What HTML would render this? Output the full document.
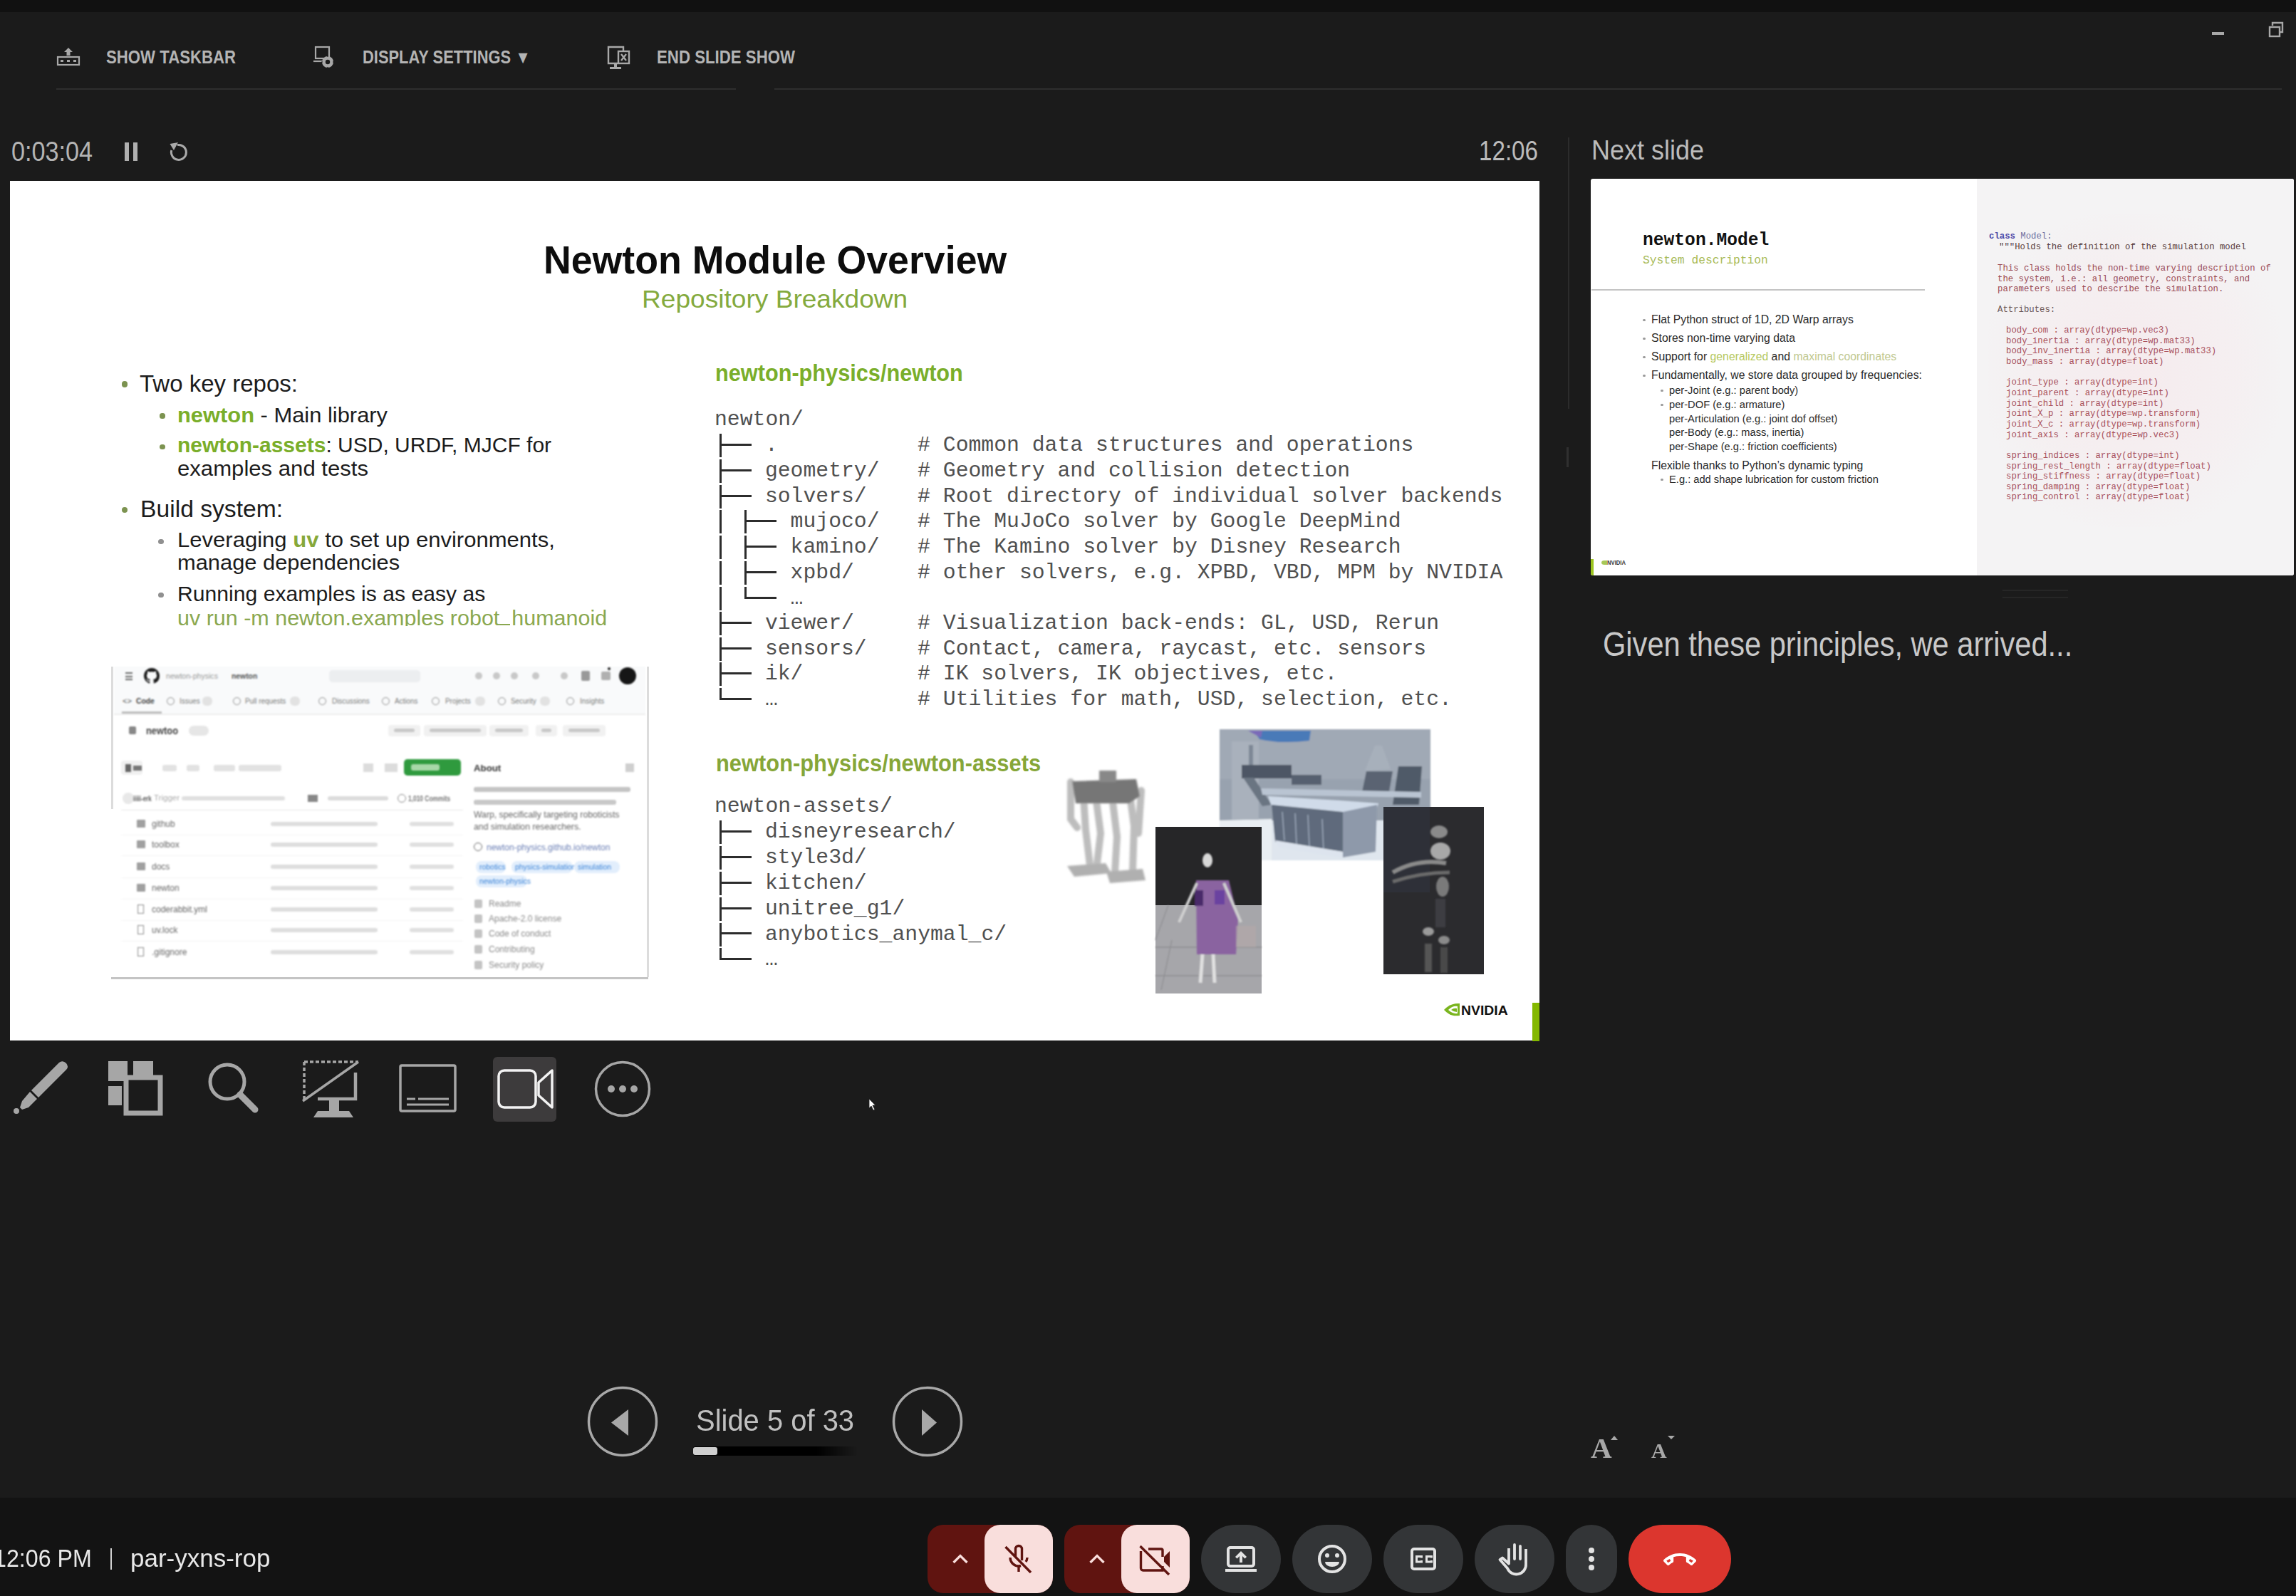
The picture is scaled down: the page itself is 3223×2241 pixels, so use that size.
<!DOCTYPE html>
<html><head><meta charset="utf-8">
<style>
html,body{margin:0;padding:0;}
body{width:3223px;height:2241px;position:relative;overflow:hidden;background:#1b1b1b;font-family:"Liberation Sans",sans-serif;}
.a{position:absolute;}
.t{position:absolute;white-space:pre;line-height:1;transform-origin:0 0;font-family:"Liberation Sans",sans-serif;}
.m{position:absolute;white-space:pre;line-height:1;transform-origin:0 0;font-family:"Liberation Mono",monospace;}
svg{position:absolute;overflow:visible;}
</style></head><body>
<!-- top strip -->
<div class="a" style="left:0;top:0;width:3223px;height:17px;background:#111111"></div>
<!-- toolbar -->
<svg style="left:0;top:0" width="1200" height="130">
  <g fill="none" stroke="#a8a8a8" stroke-width="2.2">
    <rect x="81" y="80" width="30" height="11"/>
  </g>
  <g fill="#a8a8a8">
    <path d="M96 67 L102 73 L98.5 73 L98.5 78 L93.5 78 L93.5 73 L90 73 Z"/>
    <rect x="85" y="84" width="4" height="3"/><rect x="94" y="84" width="4" height="3"/><rect x="103" y="84" width="4" height="3"/>
  </g>
  <!-- display settings icon -->
  <g fill="none" stroke="#a8a8a8" stroke-width="2.2">
    <rect x="443" y="66" width="19" height="16"/>
    <path d="M440 86 L452 86"/>
  </g>
  <g fill="#a8a8a8">
    <circle cx="460" cy="87" r="8"/>
  </g>
  <circle cx="460" cy="87" r="3.2" fill="#1b1b1b"/>
  <g stroke="#1b1b1b" stroke-width="1.2"><path d="M460 78 L460 80 M460 94 L460 96 M451 87 L453 87 M467 87 L469 87"/></g>
  <!-- end slide show icon -->
  <g fill="none" stroke="#a8a8a8" stroke-width="2.4">
    <path d="M867 89 L854 89 L854 66 L875 66 L875 72"/>
    <rect x="868" y="72" width="15" height="17"/>
  </g>
  <path d="M872 76 L879 85 M879 76 L872 85" stroke="#a8a8a8" stroke-width="2.4"/>
  <g fill="#a8a8a8"><rect x="862" y="89" width="4" height="6"/><rect x="856" y="94" width="16" height="3"/></g>
  <!-- separators -->
  <rect x="79" y="124" width="954" height="2" fill="#2e2e2e"/>
</svg>
<div class="a" style="left:1087px;top:124px;width:2116px;height:2px;background:#2e2e2e"></div>
<div class="t" style="left:149px;top:68px;font-size:25px;font-weight:700;color:#b4b4b4;transform:scaleX(0.888)">SHOW TASKBAR</div>
<div class="t" style="left:509px;top:68px;font-size:25px;font-weight:700;color:#b4b4b4;transform:scaleX(0.876)">DISPLAY SETTINGS ▼</div>
<div class="t" style="left:922px;top:68px;font-size:25px;font-weight:700;color:#b4b4b4;transform:scaleX(0.89)">END SLIDE SHOW</div>
<!-- window controls -->
<div class="a" style="left:3105px;top:45px;width:17px;height:4px;background:#a8a8a8"></div>
<svg style="left:0;top:0" width="3223" height="60">
  <g fill="none" stroke="#a8a8a8" stroke-width="2.4">
    <path d="M3190 36 L3190 32 L3204 32 L3204 45 L3200 45"/>
    <rect x="3186" y="38" width="14" height="13"/>
  </g>
</svg>
<!-- timer row -->
<div class="t" style="left:16px;top:193px;font-size:39px;color:#b4b4b4;transform:scaleX(0.877)">0:03:04</div>
<div class="a" style="left:175px;top:200px;width:6px;height:26px;background:#b0b0b0"></div>
<div class="a" style="left:187px;top:200px;width:6px;height:26px;background:#b0b0b0"></div>
<svg style="left:0;top:0" width="300" height="240">
  <path d="M249 203.6 A10.5 10.5 0 1 1 240.8 211" fill="none" stroke="#aaaaaa" stroke-width="3"/>
  <path d="M238.5 202 L250 200 L244 211 Z" fill="#aaaaaa"/>
</svg>
<div class="t" style="left:2076px;top:193px;font-size:38px;color:#bcbcbc;transform:scaleX(0.873)">12:06</div>
<div class="a" style="left:2201px;top:193px;width:2px;height:381px;background:#2c2c2c"></div>
<div class="a" style="left:2199px;top:628px;width:3px;height:28px;background:#303030"></div>
<div class="t" style="left:2234px;top:191px;font-size:39px;color:#bcbcbc;transform:scaleX(0.923)">Next slide</div>

<!-- MAIN SLIDE -->
<div id="slide" class="a" style="left:14px;top:254px;width:2147px;height:1207px;background:#ffffff;overflow:hidden"></div>
<div style="position:absolute;white-space:pre;line-height:1;transform-origin:0 0;left:763.00px;top:338.45px;font-family:'Liberation Sans',sans-serif;font-size:55px;color:#0d0d0d;font-weight:700;transform:scaleX(0.976);">Newton Module Overview</div>
<div style="position:absolute;white-space:pre;line-height:1;transform-origin:0 0;left:901.00px;top:402.38px;font-family:'Liberation Sans',sans-serif;font-size:35px;color:#84aa3e;font-weight:400;transform:scaleX(1.06);">Repository Breakdown</div>
<div style="position:absolute;left:170.80px;top:535.40px;width:8.40px;height:8.40px;background:#7c9350;border-radius:50%;"></div>
<div style="position:absolute;white-space:pre;line-height:1;transform-origin:0 0;left:196.00px;top:522.07px;font-family:'Liberation Sans',sans-serif;font-size:33px;color:#1c1c1c;font-weight:400;">Two key repos:</div>
<div style="position:absolute;left:224.40px;top:580.40px;width:7.20px;height:7.20px;background:#7c9350;border-radius:50%;"></div>
<div style="position:absolute;white-space:pre;line-height:1;transform-origin:0 0;left:249.00px;top:567.61px;font-family:'Liberation Sans',sans-serif;font-size:30px;color:#1c1c1c;font-weight:400;transform:scaleX(1.029);"><span style="color:#7aae2a;font-weight:700;">newton</span> - Main library</div>
<div style="position:absolute;left:224.40px;top:624.00px;width:7.20px;height:7.20px;background:#7c9350;border-radius:50%;"></div>
<div style="position:absolute;white-space:pre;line-height:1;transform-origin:0 0;left:249.00px;top:610.11px;font-family:'Liberation Sans',sans-serif;font-size:30px;color:#1c1c1c;font-weight:400;"><span style="color:#7aae2a;font-weight:700;">newton-assets</span>: USD, URDF, MJCF for</div>
<div style="position:absolute;white-space:pre;line-height:1;transform-origin:0 0;left:249.00px;top:642.61px;font-family:'Liberation Sans',sans-serif;font-size:30px;color:#1c1c1c;font-weight:400;transform:scaleX(1.037);">examples and tests</div>
<div style="position:absolute;left:170.80px;top:711.80px;width:8.40px;height:8.40px;background:#7c9350;border-radius:50%;"></div>
<div style="position:absolute;white-space:pre;line-height:1;transform-origin:0 0;left:196.60px;top:697.77px;font-family:'Liberation Sans',sans-serif;font-size:33px;color:#1c1c1c;font-weight:400;transform:scaleX(1.02);">Build system:</div>
<div style="position:absolute;left:222.40px;top:756.90px;width:7.20px;height:7.20px;background:#909090;border-radius:50%;"></div>
<div style="position:absolute;white-space:pre;line-height:1;transform-origin:0 0;left:249.00px;top:743.01px;font-family:'Liberation Sans',sans-serif;font-size:30px;color:#1c1c1c;font-weight:400;transform:scaleX(1.035);">Leveraging <span style="color:#86a83a;font-weight:700;">uv</span> to set up environments,</div>
<div style="position:absolute;white-space:pre;line-height:1;transform-origin:0 0;left:249.00px;top:775.21px;font-family:'Liberation Sans',sans-serif;font-size:30px;color:#1c1c1c;font-weight:400;transform:scaleX(1.028);">manage dependencies</div>
<div style="position:absolute;left:222.40px;top:831.90px;width:7.20px;height:7.20px;background:#909090;border-radius:50%;"></div>
<div style="position:absolute;white-space:pre;line-height:1;transform-origin:0 0;left:249.00px;top:818.81px;font-family:'Liberation Sans',sans-serif;font-size:30px;color:#1c1c1c;font-weight:400;transform:scaleX(1.005);">Running examples is as easy as</div>
<div style="position:absolute;left:240px;top:850px;width:640px;height:29px;overflow:hidden">
<div style="position:absolute;white-space:pre;line-height:1;transform-origin:0 0;left:9.00px;top:2.61px;font-family:'Liberation Sans',sans-serif;font-size:30px;color:#8aa850;font-weight:400;transform:scaleX(1.016);">uv run -m newton.examples robot_humanoid</div>
</div>
<div style="position:absolute;left:700.50px;top:875.50px;width:15.50px;height:2.20px;background:#8aa850;"></div>
<div style="position:absolute;white-space:pre;line-height:1;transform-origin:0 0;left:1004.00px;top:507.07px;font-family:'Liberation Sans',sans-serif;font-size:33px;color:#7aae2a;font-weight:700;transform:scaleX(0.93);">newton-physics/newton</div>
<div style="position:absolute;white-space:pre;line-height:1;transform-origin:0 0;left:1003.00px;top:575.21px;font-family:'Liberation Mono',monospace;font-size:29.75px;color:#505050;font-weight:400;">newton/</div>
<div style="position:absolute;left:1009.62px;top:609.00px;width:3.00px;height:33.00px;background:#2c2c2c;"></div>
<div style="position:absolute;left:1009.62px;top:622.50px;width:44.92px;height:3.00px;background:#2c2c2c;"></div>
<div style="position:absolute;white-space:pre;line-height:1;transform-origin:0 0;left:1073.90px;top:611.21px;font-family:'Liberation Mono',monospace;font-size:29.75px;color:#505050;font-weight:400;">.</div>
<div style="position:absolute;white-space:pre;line-height:1;transform-origin:0 0;left:1288.10px;top:611.21px;font-family:'Liberation Mono',monospace;font-size:29.75px;color:#505050;font-weight:400;"># Common data structures and operations</div>
<div style="position:absolute;left:1009.62px;top:645.00px;width:3.00px;height:33.00px;background:#2c2c2c;"></div>
<div style="position:absolute;left:1009.62px;top:658.50px;width:44.92px;height:3.00px;background:#2c2c2c;"></div>
<div style="position:absolute;white-space:pre;line-height:1;transform-origin:0 0;left:1073.90px;top:647.21px;font-family:'Liberation Mono',monospace;font-size:29.75px;color:#505050;font-weight:400;">geometry/</div>
<div style="position:absolute;white-space:pre;line-height:1;transform-origin:0 0;left:1288.10px;top:647.21px;font-family:'Liberation Mono',monospace;font-size:29.75px;color:#505050;font-weight:400;"># Geometry and collision detection</div>
<div style="position:absolute;left:1009.62px;top:681.00px;width:3.00px;height:33.00px;background:#2c2c2c;"></div>
<div style="position:absolute;left:1009.62px;top:694.50px;width:44.92px;height:3.00px;background:#2c2c2c;"></div>
<div style="position:absolute;white-space:pre;line-height:1;transform-origin:0 0;left:1073.90px;top:683.21px;font-family:'Liberation Mono',monospace;font-size:29.75px;color:#505050;font-weight:400;">solvers/</div>
<div style="position:absolute;white-space:pre;line-height:1;transform-origin:0 0;left:1288.10px;top:683.21px;font-family:'Liberation Mono',monospace;font-size:29.75px;color:#505050;font-weight:400;"># Root directory of individual solver backends</div>
<div style="position:absolute;left:1045.33px;top:716.00px;width:3.00px;height:33.00px;background:#2c2c2c;"></div>
<div style="position:absolute;left:1045.33px;top:729.50px;width:44.92px;height:3.00px;background:#2c2c2c;"></div>
<div style="position:absolute;left:1009.62px;top:716.00px;width:3.00px;height:33.00px;background:#2c2c2c;"></div>
<div style="position:absolute;white-space:pre;line-height:1;transform-origin:0 0;left:1109.60px;top:718.21px;font-family:'Liberation Mono',monospace;font-size:29.75px;color:#505050;font-weight:400;">mujoco/</div>
<div style="position:absolute;white-space:pre;line-height:1;transform-origin:0 0;left:1288.10px;top:718.21px;font-family:'Liberation Mono',monospace;font-size:29.75px;color:#505050;font-weight:400;"># The MuJoCo solver by Google DeepMind</div>
<div style="position:absolute;left:1045.33px;top:752.00px;width:3.00px;height:33.00px;background:#2c2c2c;"></div>
<div style="position:absolute;left:1045.33px;top:765.50px;width:44.92px;height:3.00px;background:#2c2c2c;"></div>
<div style="position:absolute;left:1009.62px;top:752.00px;width:3.00px;height:33.00px;background:#2c2c2c;"></div>
<div style="position:absolute;white-space:pre;line-height:1;transform-origin:0 0;left:1109.60px;top:754.21px;font-family:'Liberation Mono',monospace;font-size:29.75px;color:#505050;font-weight:400;">kamino/</div>
<div style="position:absolute;white-space:pre;line-height:1;transform-origin:0 0;left:1288.10px;top:754.21px;font-family:'Liberation Mono',monospace;font-size:29.75px;color:#505050;font-weight:400;"># The Kamino solver by Disney Research</div>
<div style="position:absolute;left:1045.33px;top:788.00px;width:3.00px;height:33.00px;background:#2c2c2c;"></div>
<div style="position:absolute;left:1045.33px;top:801.50px;width:44.92px;height:3.00px;background:#2c2c2c;"></div>
<div style="position:absolute;left:1009.62px;top:788.00px;width:3.00px;height:33.00px;background:#2c2c2c;"></div>
<div style="position:absolute;white-space:pre;line-height:1;transform-origin:0 0;left:1109.60px;top:790.21px;font-family:'Liberation Mono',monospace;font-size:29.75px;color:#505050;font-weight:400;">xpbd/</div>
<div style="position:absolute;white-space:pre;line-height:1;transform-origin:0 0;left:1288.10px;top:790.21px;font-family:'Liberation Mono',monospace;font-size:29.75px;color:#505050;font-weight:400;"># other solvers, e.g. XPBD, VBD, MPM by NVIDIA</div>
<div style="position:absolute;left:1045.33px;top:824.00px;width:3.00px;height:16.50px;background:#2c2c2c;"></div>
<div style="position:absolute;left:1045.33px;top:837.50px;width:44.92px;height:3.00px;background:#2c2c2c;"></div>
<div style="position:absolute;left:1009.62px;top:824.00px;width:3.00px;height:33.00px;background:#2c2c2c;"></div>
<div style="position:absolute;white-space:pre;line-height:1;transform-origin:0 0;left:1109.60px;top:826.21px;font-family:'Liberation Mono',monospace;font-size:29.75px;color:#505050;font-weight:400;">…</div>
<div style="position:absolute;left:1009.62px;top:859.00px;width:3.00px;height:33.00px;background:#2c2c2c;"></div>
<div style="position:absolute;left:1009.62px;top:872.50px;width:44.92px;height:3.00px;background:#2c2c2c;"></div>
<div style="position:absolute;white-space:pre;line-height:1;transform-origin:0 0;left:1073.90px;top:861.21px;font-family:'Liberation Mono',monospace;font-size:29.75px;color:#505050;font-weight:400;">viewer/</div>
<div style="position:absolute;white-space:pre;line-height:1;transform-origin:0 0;left:1288.10px;top:861.21px;font-family:'Liberation Mono',monospace;font-size:29.75px;color:#505050;font-weight:400;"># Visualization back-ends: GL, USD, Rerun</div>
<div style="position:absolute;left:1009.62px;top:895.00px;width:3.00px;height:33.00px;background:#2c2c2c;"></div>
<div style="position:absolute;left:1009.62px;top:908.50px;width:44.92px;height:3.00px;background:#2c2c2c;"></div>
<div style="position:absolute;white-space:pre;line-height:1;transform-origin:0 0;left:1073.90px;top:897.21px;font-family:'Liberation Mono',monospace;font-size:29.75px;color:#505050;font-weight:400;">sensors/</div>
<div style="position:absolute;white-space:pre;line-height:1;transform-origin:0 0;left:1288.10px;top:897.21px;font-family:'Liberation Mono',monospace;font-size:29.75px;color:#505050;font-weight:400;"># Contact, camera, raycast, etc. sensors</div>
<div style="position:absolute;left:1009.62px;top:930.00px;width:3.00px;height:33.00px;background:#2c2c2c;"></div>
<div style="position:absolute;left:1009.62px;top:943.50px;width:44.92px;height:3.00px;background:#2c2c2c;"></div>
<div style="position:absolute;white-space:pre;line-height:1;transform-origin:0 0;left:1073.90px;top:932.21px;font-family:'Liberation Mono',monospace;font-size:29.75px;color:#505050;font-weight:400;">ik/</div>
<div style="position:absolute;white-space:pre;line-height:1;transform-origin:0 0;left:1288.10px;top:932.21px;font-family:'Liberation Mono',monospace;font-size:29.75px;color:#505050;font-weight:400;"># IK solvers, IK objectives, etc.</div>
<div style="position:absolute;left:1009.62px;top:966.00px;width:3.00px;height:16.50px;background:#2c2c2c;"></div>
<div style="position:absolute;left:1009.62px;top:979.50px;width:44.92px;height:3.00px;background:#2c2c2c;"></div>
<div style="position:absolute;white-space:pre;line-height:1;transform-origin:0 0;left:1073.90px;top:968.21px;font-family:'Liberation Mono',monospace;font-size:29.75px;color:#505050;font-weight:400;">…</div>
<div style="position:absolute;white-space:pre;line-height:1;transform-origin:0 0;left:1288.10px;top:968.21px;font-family:'Liberation Mono',monospace;font-size:29.75px;color:#505050;font-weight:400;"># Utilities for math, USD, selection, etc.</div>
<div style="position:absolute;white-space:pre;line-height:1;transform-origin:0 0;left:1005.00px;top:1055.07px;font-family:'Liberation Sans',sans-serif;font-size:33px;color:#86a638;font-weight:700;transform:scaleX(0.935);">newton-physics/newton-assets</div>
<div style="position:absolute;white-space:pre;line-height:1;transform-origin:0 0;left:1003.00px;top:1118.21px;font-family:'Liberation Mono',monospace;font-size:29.75px;color:#505050;font-weight:400;">newton-assets/</div>
<div style="position:absolute;left:1009.62px;top:1152.00px;width:3.00px;height:33.00px;background:#2c2c2c;"></div>
<div style="position:absolute;left:1009.62px;top:1165.50px;width:44.92px;height:3.00px;background:#2c2c2c;"></div>
<div style="position:absolute;white-space:pre;line-height:1;transform-origin:0 0;left:1073.90px;top:1154.21px;font-family:'Liberation Mono',monospace;font-size:29.75px;color:#505050;font-weight:400;">disneyresearch/</div>
<div style="position:absolute;left:1009.62px;top:1188.00px;width:3.00px;height:33.00px;background:#2c2c2c;"></div>
<div style="position:absolute;left:1009.62px;top:1201.50px;width:44.92px;height:3.00px;background:#2c2c2c;"></div>
<div style="position:absolute;white-space:pre;line-height:1;transform-origin:0 0;left:1073.90px;top:1190.21px;font-family:'Liberation Mono',monospace;font-size:29.75px;color:#505050;font-weight:400;">style3d/</div>
<div style="position:absolute;left:1009.62px;top:1224.00px;width:3.00px;height:33.00px;background:#2c2c2c;"></div>
<div style="position:absolute;left:1009.62px;top:1237.50px;width:44.92px;height:3.00px;background:#2c2c2c;"></div>
<div style="position:absolute;white-space:pre;line-height:1;transform-origin:0 0;left:1073.90px;top:1226.21px;font-family:'Liberation Mono',monospace;font-size:29.75px;color:#505050;font-weight:400;">kitchen/</div>
<div style="position:absolute;left:1009.62px;top:1260.00px;width:3.00px;height:33.00px;background:#2c2c2c;"></div>
<div style="position:absolute;left:1009.62px;top:1273.50px;width:44.92px;height:3.00px;background:#2c2c2c;"></div>
<div style="position:absolute;white-space:pre;line-height:1;transform-origin:0 0;left:1073.90px;top:1262.21px;font-family:'Liberation Mono',monospace;font-size:29.75px;color:#505050;font-weight:400;">unitree_g1/</div>
<div style="position:absolute;left:1009.62px;top:1295.50px;width:3.00px;height:33.00px;background:#2c2c2c;"></div>
<div style="position:absolute;left:1009.62px;top:1309.00px;width:44.92px;height:3.00px;background:#2c2c2c;"></div>
<div style="position:absolute;white-space:pre;line-height:1;transform-origin:0 0;left:1073.90px;top:1297.71px;font-family:'Liberation Mono',monospace;font-size:29.75px;color:#505050;font-weight:400;">anybotics_anymal_c/</div>
<div style="position:absolute;left:1009.62px;top:1331.00px;width:3.00px;height:16.50px;background:#2c2c2c;"></div>
<div style="position:absolute;left:1009.62px;top:1344.50px;width:44.92px;height:3.00px;background:#2c2c2c;"></div>
<div style="position:absolute;white-space:pre;line-height:1;transform-origin:0 0;left:1073.90px;top:1333.21px;font-family:'Liberation Mono',monospace;font-size:29.75px;color:#505050;font-weight:400;">…</div>
<div style="position:absolute;left:2150.50px;top:1408.00px;width:10.50px;height:53.50px;background:#84b800;"></div>
<svg style="position:absolute;left:0;top:0;overflow:visible" width="2200" height="1470">
<path d="M2027 1418 Q2036 1408 2049 1409 L2049 1426 Q2036 1428 2027 1418 Z" fill="#7ab51f"/>
<path d="M2033 1418 Q2039 1412 2046 1413 L2046 1423 Q2039 1424 2033 1418 Z" fill="#ffffff"/>
<path d="M2037 1418 Q2041 1415 2045 1416 L2045 1421 Q2041 1421 2037 1418 Z" fill="#7ab51f"/>
</svg>
<div style="position:absolute;white-space:pre;line-height:1;transform-origin:0 0;left:2051.00px;top:1409.42px;font-family:'Liberation Sans',sans-serif;font-size:19px;color:#111;font-weight:700;transform:scaleX(1.02);">NVIDIA</div>
<div style="position:absolute;left:157px;top:934px;width:754px;height:441px;overflow:hidden;filter:blur(0.9px)">
<div style="position:absolute;left:3.00px;top:2.00px;width:746.00px;height:67.00px;background:#f9fafb;"></div>
<div style="position:absolute;left:3.00px;top:68.00px;width:746.00px;height:1.50px;background:#ededed;"></div>
<div style="position:absolute;left:19.00px;top:10.00px;width:10.00px;height:2.00px;background:#666;"></div>
<div style="position:absolute;left:19.00px;top:14.50px;width:10.00px;height:2.00px;background:#666;"></div>
<div style="position:absolute;left:19.00px;top:19.00px;width:10.00px;height:2.00px;background:#666;"></div>
<svg style="position:absolute;left:44.6px;top:3.7px" width="22" height="22" viewBox="0 0 16 16"><path fill="#1a1a1a" d="M8 0C3.58 0 0 3.58 0 8c0 3.54 2.29 6.53 5.47 7.59.4.07.55-.17.55-.38 0-.19-.01-.82-.01-1.49-2.01.37-2.530-.49-2.690-.94-.09-.23-.48-.94-.82-1.130-.28-.15-.68-.52-.01-.53.63-.01 1.080.58 1.230.82.72 1.21 1.870.87 2.330.66.07-.52.28-.87.51-1.070-1.780-.2-3.640-.89-3.640-3.950 0-.87.31-1.590.82-2.150-.08-.2-.36-1.020.08-2.120 0 0 .67-.21 2.2.82.64-.18 1.320-.27 2-.27.68 0 1.360.09 2 .27 1.530-1.040 2.2-.82 2.2-.82.44 1.1.16 1.920.08 2.120.51.56.82 1.270.82 2.150 0 3.070-1.870 3.750-3.650 3.950.29.25.54.73.54 1.480 0 1.070-.01 1.930-.01 2.2 0 .21.15.46.55.38A8.013 8.013 0 0016 8c0-4.42-3.58-8-8-8z"/></svg><div style="position:absolute;white-space:pre;line-height:1;transform-origin:0 0;left:76.00px;top:10.41px;font-family:'Liberation Sans',sans-serif;font-size:11.5px;color:#9a9a9a;font-weight:400;transform:scaleX(0.92);">newton-physics</div>
<div style="position:absolute;white-space:pre;line-height:1;transform-origin:0 0;left:168.00px;top:10.41px;font-family:'Liberation Sans',sans-serif;font-size:11.5px;color:#555;font-weight:700;transform:scaleX(0.9);">newton</div>
<div style="position:absolute;left:305.00px;top:7.00px;width:128.00px;height:17.00px;background:#eceef0;border-radius:5px;"></div>
<div style="position:absolute;left:510.00px;top:10.00px;width:10.00px;height:10.00px;background:#c8c8c8;border-radius:50%;"></div>
<div style="position:absolute;left:535.00px;top:10.00px;width:10.00px;height:10.00px;background:#c8c8c8;border-radius:50%;"></div>
<div style="position:absolute;left:560.00px;top:10.00px;width:10.00px;height:10.00px;background:#c8c8c8;border-radius:50%;"></div>
<div style="position:absolute;left:590.00px;top:10.00px;width:10.00px;height:10.00px;background:#c8c8c8;border-radius:50%;"></div>
<div style="position:absolute;left:630.00px;top:10.00px;width:10.00px;height:10.00px;background:#c8c8c8;border-radius:50%;"></div>
<div style="position:absolute;left:659.00px;top:8.00px;width:12.00px;height:14.00px;background:#999;border-radius:2px;"></div>
<div style="position:absolute;left:687.00px;top:9.00px;width:13.00px;height:12.00px;background:#b0b0b0;border-radius:2px;"></div>
<div style="position:absolute;left:711.80px;top:2.80px;width:24.00px;height:24.00px;background:#161616;border-radius:50%;"></div>
<div style="position:absolute;left:696.00px;top:3.00px;width:4.00px;height:4.00px;background:#222;border-radius:50%;"></div>
<div style="position:absolute;white-space:pre;line-height:1;transform-origin:0 0;left:15.00px;top:45.25px;font-family:'Liberation Sans',sans-serif;font-size:11px;color:#555;font-weight:400;">&lt;&gt;</div>
<div style="position:absolute;white-space:pre;line-height:1;transform-origin:0 0;left:34.00px;top:45.01px;font-family:'Liberation Sans',sans-serif;font-size:11.5px;color:#444;font-weight:700;transform:scaleX(0.9);">Code</div>
<div style="position:absolute;left:76.50px;top:45.00px;width:11.00px;height:11.00px;background:transparent;border:1.6px solid #8a8a8a;border-radius:50%;box-sizing:border-box;"></div>
<div style="position:absolute;white-space:pre;line-height:1;transform-origin:0 0;left:95.00px;top:45.25px;font-family:'Liberation Sans',sans-serif;font-size:11px;color:#7a7a7a;font-weight:400;transform:scaleX(0.9);">Issues</div>
<div style="position:absolute;left:127.00px;top:44.00px;width:14.00px;height:13.00px;background:#e2e2e2;border-radius:6px;"></div>
<div style="position:absolute;left:169.50px;top:45.00px;width:11.00px;height:11.00px;background:transparent;border:1.6px solid #8a8a8a;border-radius:50%;box-sizing:border-box;"></div>
<div style="position:absolute;white-space:pre;line-height:1;transform-origin:0 0;left:187.00px;top:45.25px;font-family:'Liberation Sans',sans-serif;font-size:11px;color:#7a7a7a;font-weight:400;transform:scaleX(0.9);">Pull requests</div>
<div style="position:absolute;left:250.00px;top:44.00px;width:14.00px;height:13.00px;background:#e2e2e2;border-radius:6px;"></div>
<div style="position:absolute;left:289.50px;top:45.00px;width:11.00px;height:11.00px;background:transparent;border:1.6px solid #8a8a8a;border-radius:50%;box-sizing:border-box;"></div>
<div style="position:absolute;white-space:pre;line-height:1;transform-origin:0 0;left:309.00px;top:45.25px;font-family:'Liberation Sans',sans-serif;font-size:11px;color:#7a7a7a;font-weight:400;transform:scaleX(0.9);">Discussions</div>
<div style="position:absolute;left:378.50px;top:45.00px;width:11.00px;height:11.00px;background:transparent;border:1.6px solid #8a8a8a;border-radius:50%;box-sizing:border-box;"></div>
<div style="position:absolute;white-space:pre;line-height:1;transform-origin:0 0;left:397.00px;top:45.25px;font-family:'Liberation Sans',sans-serif;font-size:11px;color:#7a7a7a;font-weight:400;transform:scaleX(0.9);">Actions</div>
<div style="position:absolute;left:448.50px;top:45.00px;width:11.00px;height:11.00px;background:transparent;border:1.6px solid #8a8a8a;border-radius:50%;box-sizing:border-box;"></div>
<div style="position:absolute;white-space:pre;line-height:1;transform-origin:0 0;left:468.00px;top:45.25px;font-family:'Liberation Sans',sans-serif;font-size:11px;color:#7a7a7a;font-weight:400;transform:scaleX(0.9);">Projects</div>
<div style="position:absolute;left:510.00px;top:44.00px;width:14.00px;height:13.00px;background:#e2e2e2;border-radius:6px;"></div>
<div style="position:absolute;left:541.50px;top:45.00px;width:11.00px;height:11.00px;background:transparent;border:1.6px solid #8a8a8a;border-radius:50%;box-sizing:border-box;"></div>
<div style="position:absolute;white-space:pre;line-height:1;transform-origin:0 0;left:560.00px;top:45.25px;font-family:'Liberation Sans',sans-serif;font-size:11px;color:#7a7a7a;font-weight:400;transform:scaleX(0.9);">Security</div>
<div style="position:absolute;left:601.00px;top:44.00px;width:14.00px;height:13.00px;background:#e2e2e2;border-radius:6px;"></div>
<div style="position:absolute;left:637.50px;top:45.00px;width:11.00px;height:11.00px;background:transparent;border:1.6px solid #8a8a8a;border-radius:50%;box-sizing:border-box;"></div>
<div style="position:absolute;white-space:pre;line-height:1;transform-origin:0 0;left:657.00px;top:45.25px;font-family:'Liberation Sans',sans-serif;font-size:11px;color:#7a7a7a;font-weight:400;transform:scaleX(0.9);">Insights</div>
<div style="position:absolute;left:14.00px;top:65.00px;width:56.00px;height:3.00px;background:#bdbdbd;"></div>
<div style="position:absolute;left:24.00px;top:86.00px;width:10.00px;height:11.00px;background:#888;border-radius:2px;"></div>
<div style="position:absolute;white-space:pre;line-height:1;transform-origin:0 0;left:48.00px;top:85.19px;font-family:'Liberation Sans',sans-serif;font-size:14px;color:#444;font-weight:700;transform:scaleX(0.92);">newtoo</div>
<div style="position:absolute;left:108.00px;top:85.00px;width:28.00px;height:14.00px;background:#e6e6e6;border-radius:7px;"></div>
<div style="position:absolute;left:388.00px;top:84.00px;width:45.00px;height:16.00px;background:#f1f1f1;border-radius:4px;"></div>
<div style="position:absolute;left:396.00px;top:89.00px;width:29.00px;height:5.00px;background:#c8c8c8;border-radius:3px;"></div>
<div style="position:absolute;left:438.00px;top:84.00px;width:88.00px;height:16.00px;background:#f1f1f1;border-radius:4px;"></div>
<div style="position:absolute;left:446.00px;top:89.00px;width:72.00px;height:5.00px;background:#c8c8c8;border-radius:3px;"></div>
<div style="position:absolute;left:530.00px;top:84.00px;width:55.00px;height:16.00px;background:#f1f1f1;border-radius:4px;"></div>
<div style="position:absolute;left:538.00px;top:89.00px;width:39.00px;height:5.00px;background:#c8c8c8;border-radius:3px;"></div>
<div style="position:absolute;left:595.00px;top:84.00px;width:30.00px;height:16.00px;background:#f1f1f1;border-radius:4px;"></div>
<div style="position:absolute;left:603.00px;top:89.00px;width:14.00px;height:5.00px;background:#c8c8c8;border-radius:3px;"></div>
<div style="position:absolute;left:633.00px;top:84.00px;width:60.00px;height:16.00px;background:#f1f1f1;border-radius:4px;"></div>
<div style="position:absolute;left:641.00px;top:89.00px;width:44.00px;height:5.00px;background:#c8c8c8;border-radius:3px;"></div>
<div style="position:absolute;left:13.00px;top:134.00px;width:30.00px;height:20.00px;background:#f0f0f0;border-radius:4px;"></div>
<div style="position:absolute;left:19.00px;top:139.00px;width:8.00px;height:11.00px;background:#666;"></div>
<div style="position:absolute;left:30.00px;top:141.00px;width:12.00px;height:7.00px;background:#777;"></div>
<div style="position:absolute;left:71.00px;top:140.00px;width:20.00px;height:9.00px;background:#e2e2e2;border-radius:3px;"></div>
<div style="position:absolute;left:105.00px;top:140.00px;width:18.00px;height:9.00px;background:#e2e2e2;border-radius:3px;"></div>
<div style="position:absolute;left:143.00px;top:140.00px;width:30.00px;height:9.00px;background:#e2e2e2;border-radius:3px;"></div>
<div style="position:absolute;left:178.00px;top:140.00px;width:60.00px;height:9.00px;background:#e2e2e2;border-radius:3px;"></div>
<div style="position:absolute;left:353.00px;top:138.00px;width:14.00px;height:12.00px;background:#dcdcdc;"></div>
<div style="position:absolute;left:383.00px;top:138.00px;width:18.00px;height:12.00px;background:#dcdcdc;"></div>
<div style="position:absolute;left:410.00px;top:132.00px;width:80.00px;height:23.00px;background:#2f9a3e;border-radius:5px;"></div>
<div style="position:absolute;left:420.00px;top:139.00px;width:40.00px;height:9.00px;background:#a8d8a8;border-radius:3px;"></div>
<div style="position:absolute;white-space:pre;line-height:1;transform-origin:0 0;left:508.00px;top:138.13px;font-family:'Liberation Sans',sans-serif;font-size:13.5px;color:#333;font-weight:700;transform:scaleX(0.98);">About</div>
<div style="position:absolute;left:721.00px;top:138.00px;width:12.00px;height:12.00px;background:#cfcfcf;"></div>
<div style="position:absolute;left:15.00px;top:179.00px;width:16.00px;height:16.00px;background:#e8e8e8;border-radius:50%;"></div>
<div style="position:absolute;white-space:pre;line-height:1;transform-origin:0 0;left:30.00px;top:181.65px;font-family:'Liberation Sans',sans-serif;font-size:11px;color:#555;font-weight:700;transform:scaleX(0.72);">iiiii-erk</div>
<div style="position:absolute;white-space:pre;line-height:1;transform-origin:0 0;left:59.00px;top:181.41px;font-family:'Liberation Sans',sans-serif;font-size:11.5px;color:#aaa;font-weight:400;">Trigger</div>
<div style="position:absolute;left:98.00px;top:184.00px;width:145.00px;height:6.00px;background:#e0e0e0;border-radius:3px;"></div>
<div style="position:absolute;left:275.00px;top:182.00px;width:14.00px;height:10.00px;background:#888;"></div>
<div style="position:absolute;left:303.00px;top:184.00px;width:85.00px;height:6.00px;background:#dcdcdc;border-radius:3px;"></div>
<div style="position:absolute;left:401.00px;top:181.00px;width:12.00px;height:12.00px;background:transparent;border:1.5px solid #888;border-radius:50%;box-sizing:border-box;"></div>
<div style="position:absolute;white-space:pre;line-height:1;transform-origin:0 0;left:416.00px;top:181.89px;font-family:'Liberation Sans',sans-serif;font-size:10.5px;color:#777;font-weight:700;transform:scaleX(0.8);">1,010 Commits</div>
<div style="position:absolute;left:13.00px;top:203.00px;width:480.00px;height:1.00px;background:#e6e6e6;"></div>
<div style="position:absolute;left:35.00px;top:216.50px;width:12.00px;height:11.00px;background:#a0a0a0;border-radius:1px;"></div>
<div style="position:absolute;white-space:pre;line-height:1;transform-origin:0 0;left:56.00px;top:216.66px;font-family:'Liberation Sans',sans-serif;font-size:12px;color:#666;font-weight:400;">github</div>
<div style="position:absolute;left:223.00px;top:219.50px;width:150.00px;height:6.00px;background:#dedede;border-radius:3px;"></div>
<div style="position:absolute;left:418.00px;top:219.50px;width:62.00px;height:6.00px;background:#e0e0e0;border-radius:3px;"></div>
<div style="position:absolute;left:13.00px;top:237.50px;width:480.00px;height:1.00px;background:#f4f4f4;"></div>
<div style="position:absolute;left:35.00px;top:246.00px;width:12.00px;height:11.00px;background:#a0a0a0;border-radius:1px;"></div>
<div style="position:absolute;white-space:pre;line-height:1;transform-origin:0 0;left:56.00px;top:246.16px;font-family:'Liberation Sans',sans-serif;font-size:12px;color:#666;font-weight:400;">toolbox</div>
<div style="position:absolute;left:223.00px;top:249.00px;width:150.00px;height:6.00px;background:#dedede;border-radius:3px;"></div>
<div style="position:absolute;left:418.00px;top:249.00px;width:62.00px;height:6.00px;background:#e0e0e0;border-radius:3px;"></div>
<div style="position:absolute;left:13.00px;top:267.00px;width:480.00px;height:1.00px;background:#f4f4f4;"></div>
<div style="position:absolute;left:35.00px;top:277.00px;width:12.00px;height:11.00px;background:#a0a0a0;border-radius:1px;"></div>
<div style="position:absolute;white-space:pre;line-height:1;transform-origin:0 0;left:56.00px;top:277.16px;font-family:'Liberation Sans',sans-serif;font-size:12px;color:#666;font-weight:400;">docs</div>
<div style="position:absolute;left:223.00px;top:280.00px;width:150.00px;height:6.00px;background:#dedede;border-radius:3px;"></div>
<div style="position:absolute;left:418.00px;top:280.00px;width:62.00px;height:6.00px;background:#e0e0e0;border-radius:3px;"></div>
<div style="position:absolute;left:13.00px;top:298.00px;width:480.00px;height:1.00px;background:#f4f4f4;"></div>
<div style="position:absolute;left:35.00px;top:306.70px;width:12.00px;height:11.00px;background:#a0a0a0;border-radius:1px;"></div>
<div style="position:absolute;white-space:pre;line-height:1;transform-origin:0 0;left:56.00px;top:306.86px;font-family:'Liberation Sans',sans-serif;font-size:12px;color:#666;font-weight:400;">newton</div>
<div style="position:absolute;left:223.00px;top:309.70px;width:150.00px;height:6.00px;background:#dedede;border-radius:3px;"></div>
<div style="position:absolute;left:418.00px;top:309.70px;width:62.00px;height:6.00px;background:#e0e0e0;border-radius:3px;"></div>
<div style="position:absolute;left:13.00px;top:327.70px;width:480.00px;height:1.00px;background:#f4f4f4;"></div>
<div style="position:absolute;left:36.00px;top:335.50px;width:9.00px;height:13.00px;background:transparent;border:1.5px solid #8a8a8a;box-sizing:border-box;"></div>
<div style="position:absolute;white-space:pre;line-height:1;transform-origin:0 0;left:56.00px;top:336.66px;font-family:'Liberation Sans',sans-serif;font-size:12px;color:#666;font-weight:400;">coderabbit.yml</div>
<div style="position:absolute;left:223.00px;top:339.50px;width:150.00px;height:6.00px;background:#dedede;border-radius:3px;"></div>
<div style="position:absolute;left:418.00px;top:339.50px;width:62.00px;height:6.00px;background:#e0e0e0;border-radius:3px;"></div>
<div style="position:absolute;left:13.00px;top:357.50px;width:480.00px;height:1.00px;background:#f4f4f4;"></div>
<div style="position:absolute;left:36.00px;top:365.00px;width:9.00px;height:13.00px;background:transparent;border:1.5px solid #8a8a8a;box-sizing:border-box;"></div>
<div style="position:absolute;white-space:pre;line-height:1;transform-origin:0 0;left:56.00px;top:366.16px;font-family:'Liberation Sans',sans-serif;font-size:12px;color:#666;font-weight:400;">uv.lock</div>
<div style="position:absolute;left:223.00px;top:369.00px;width:150.00px;height:6.00px;background:#dedede;border-radius:3px;"></div>
<div style="position:absolute;left:418.00px;top:369.00px;width:62.00px;height:6.00px;background:#e0e0e0;border-radius:3px;"></div>
<div style="position:absolute;left:13.00px;top:387.00px;width:480.00px;height:1.00px;background:#f4f4f4;"></div>
<div style="position:absolute;left:36.00px;top:396.00px;width:9.00px;height:13.00px;background:transparent;border:1.5px solid #8a8a8a;box-sizing:border-box;"></div>
<div style="position:absolute;white-space:pre;line-height:1;transform-origin:0 0;left:56.00px;top:397.16px;font-family:'Liberation Sans',sans-serif;font-size:12px;color:#666;font-weight:400;">.gitignore</div>
<div style="position:absolute;left:223.00px;top:400.00px;width:150.00px;height:6.00px;background:#dedede;border-radius:3px;"></div>
<div style="position:absolute;left:418.00px;top:400.00px;width:62.00px;height:6.00px;background:#e0e0e0;border-radius:3px;"></div>
<div style="position:absolute;left:508.00px;top:171.00px;width:220.00px;height:7.00px;background:#c4c4c4;border-radius:3px;"></div>
<div style="position:absolute;left:508.00px;top:189.00px;width:200.00px;height:7.00px;background:#c8c8c8;border-radius:3px;"></div>
<div style="position:absolute;white-space:pre;line-height:1;transform-origin:0 0;left:508.00px;top:203.52px;font-family:'Liberation Sans',sans-serif;font-size:12.5px;color:#666;font-weight:400;transform:scaleX(0.98);">Warp, specifically targeting roboticists</div>
<div style="position:absolute;white-space:pre;line-height:1;transform-origin:0 0;left:508.00px;top:221.32px;font-family:'Liberation Sans',sans-serif;font-size:12.5px;color:#666;font-weight:400;transform:scaleX(0.98);">and simulation researchers.</div>
<div style="position:absolute;left:508.00px;top:249.00px;width:12.00px;height:12.00px;background:transparent;border:1.6px solid #666;border-radius:50%;box-sizing:border-box;"></div>
<div style="position:absolute;white-space:pre;line-height:1;transform-origin:0 0;left:526.00px;top:249.66px;font-family:'Liberation Sans',sans-serif;font-size:12px;color:#6b7fb5;font-weight:400;">newton-physics.github.io/newton</div>
<div style="position:absolute;left:511.00px;top:275.00px;width:42.00px;height:17.00px;background:#e2eefc;border-radius:8px;"></div>
<div style="position:absolute;white-space:pre;line-height:1;transform-origin:0 0;left:516.00px;top:278.15px;font-family:'Liberation Sans',sans-serif;font-size:11px;color:#3d85d8;font-weight:400;transform:scaleX(0.95);">robotics</div>
<div style="position:absolute;left:561.00px;top:275.00px;width:86.00px;height:17.00px;background:#e2eefc;border-radius:8px;"></div>
<div style="position:absolute;white-space:pre;line-height:1;transform-origin:0 0;left:566.00px;top:278.15px;font-family:'Liberation Sans',sans-serif;font-size:11px;color:#3d85d8;font-weight:400;transform:scaleX(0.95);">physics-simulation</div>
<div style="position:absolute;left:649.00px;top:275.00px;width:64.00px;height:17.00px;background:#e2eefc;border-radius:8px;"></div>
<div style="position:absolute;white-space:pre;line-height:1;transform-origin:0 0;left:654.00px;top:278.15px;font-family:'Liberation Sans',sans-serif;font-size:11px;color:#3d85d8;font-weight:400;transform:scaleX(0.95);">simulation</div>
<div style="position:absolute;left:511.00px;top:295.00px;width:72.00px;height:17.00px;background:#e2eefc;border-radius:8px;"></div>
<div style="position:absolute;white-space:pre;line-height:1;transform-origin:0 0;left:516.00px;top:297.65px;font-family:'Liberation Sans',sans-serif;font-size:11px;color:#3d85d8;font-weight:400;transform:scaleX(0.95);">newton-physics</div>
<div style="position:absolute;left:509.00px;top:329.00px;width:11.00px;height:12.00px;background:#c4c4c4;border-radius:2px;"></div>
<div style="position:absolute;white-space:pre;line-height:1;transform-origin:0 0;left:529.00px;top:329.16px;font-family:'Liberation Sans',sans-serif;font-size:12px;color:#8a8a8a;font-weight:400;">Readme</div>
<div style="position:absolute;left:509.00px;top:350.00px;width:11.00px;height:12.00px;background:#c4c4c4;border-radius:2px;"></div>
<div style="position:absolute;white-space:pre;line-height:1;transform-origin:0 0;left:529.00px;top:350.16px;font-family:'Liberation Sans',sans-serif;font-size:12px;color:#8a8a8a;font-weight:400;">Apache-2.0 license</div>
<div style="position:absolute;left:509.00px;top:371.00px;width:11.00px;height:12.00px;background:#c4c4c4;border-radius:2px;"></div>
<div style="position:absolute;white-space:pre;line-height:1;transform-origin:0 0;left:529.00px;top:371.16px;font-family:'Liberation Sans',sans-serif;font-size:12px;color:#8a8a8a;font-weight:400;">Code of conduct</div>
<div style="position:absolute;left:509.00px;top:393.00px;width:11.00px;height:12.00px;background:#c4c4c4;border-radius:2px;"></div>
<div style="position:absolute;white-space:pre;line-height:1;transform-origin:0 0;left:529.00px;top:393.16px;font-family:'Liberation Sans',sans-serif;font-size:12px;color:#8a8a8a;font-weight:400;">Contributing</div>
<div style="position:absolute;left:509.00px;top:415.00px;width:11.00px;height:12.00px;background:#c4c4c4;border-radius:2px;"></div>
<div style="position:absolute;white-space:pre;line-height:1;transform-origin:0 0;left:529.00px;top:415.16px;font-family:'Liberation Sans',sans-serif;font-size:12px;color:#8a8a8a;font-weight:400;">Security policy</div>
</div>
<div style="position:absolute;left:155.50px;top:936.00px;width:3.00px;height:200.00px;background:#dcdcdc;"></div>
<div style="position:absolute;left:908.00px;top:936.00px;width:3.00px;height:436.00px;background:#dcdcdc;"></div>
<div style="position:absolute;left:156.00px;top:1372.00px;width:754.00px;height:3.00px;background:#c4c4c4;"></div>
<svg style="position:absolute;left:0;top:0;overflow:visible" width="2200" height="1470">
<defs>
<filter id="b1" x="-10%" y="-10%" width="120%" height="120%"><feGaussianBlur stdDeviation="1.6"/></filter>
<filter id="b2" x="-10%" y="-10%" width="120%" height="120%"><feGaussianBlur stdDeviation="1.0"/></filter>
<linearGradient id="kf" x1="0" y1="0" x2="0" y2="1"><stop offset="0" stop-color="#b9c3cf"/><stop offset="1" stop-color="#dfe6ee"/></linearGradient>
</defs>
<!-- robot -->
<g filter="url(#b1)">
<g stroke="#bdbdbd" stroke-width="10" fill="none" stroke-linecap="round">
<path d="M1503 1098 L1503 1150 L1512 1162"/>
<path d="M1520 1105 L1524 1165 L1530 1215"/>
<path d="M1537 1110 L1545 1170 L1540 1212"/>
<path d="M1560 1110 L1568 1175 L1565 1225"/>
<path d="M1585 1108 L1592 1160 L1590 1222"/>
<path d="M1602 1110 L1598 1170"/>
</g>
<path d="M1505 1097 L1595 1094 L1600 1118 L1585 1128 L1510 1128 Z" fill="#767676"/>
<rect x="1543" y="1082" width="24" height="16" fill="#888"/>
<path d="M1498 1216 L1552 1212 L1560 1226 L1508 1231 Z" fill="#b0b0b0"/>
<path d="M1553 1224 L1604 1220 L1608 1236 L1558 1240 Z" fill="#b0b0b0"/>
</g>
<!-- kitchen -->
<g filter="url(#b2)">
<rect x="1712" y="1024" width="296" height="184" fill="#dfe6ee"/>
<rect x="1712" y="1024" width="296" height="128" fill="#98a2af"/>
<rect x="1712" y="1024" width="296" height="70" fill="#a0a9b5"/>
<path d="M1712 1152 L1785 1150 L1785 1208 L1712 1208 Z" fill="#e9eef3"/>
<path d="M1760 1026 L1840 1026 L1838 1040 Q1800 1045 1768 1038 Z" fill="#4a7ab8"/>
<path d="M1752 1026 L1772 1026 L1770 1036 Z" fill="#7a6ab8"/>
<rect x="1729" y="1041" width="38" height="110" fill="#a9b1bc"/>
<rect x="1753" y="1046" width="6" height="35" fill="#7e8896"/>
<rect x="1743" y="1074" width="70" height="19" fill="#4d5765"/>
<rect x="1813" y="1088" width="42" height="14" fill="#56616f"/>
<path d="M1745 1092 L1760 1092 L1785 1130 L1772 1132 Z" fill="#6a7482"/>
<path d="M1930 1047 L1940 1047 L1952 1080 L1916 1082 Z" fill="#a7b0bb"/>
<path d="M1918 1083 L1955 1083 L1950 1112 L1912 1112 Z" fill="#5a6472"/>
<path d="M1963 1076 L1996 1076 L1992 1130 L1955 1130 Z" fill="#4f5a68"/>
<path d="M1770 1107 L1995 1112 L1995 1120 L1772 1116 Z" fill="#b9c4d2"/>
<path d="M1780 1118 L1880 1124 L1935 1128 L1930 1142 L1880 1140 L1785 1132 Z" fill="#d0dbe9"/>
<path d="M1785 1130 L1885 1140 L1885 1196 L1790 1182 Z" fill="#5f6a7b"/>
<g stroke="#9aa6b8" stroke-width="1.5"><path d="M1800 1140 L1803 1180 M1818 1142 L1820 1185 M1836 1144 L1838 1188 M1856 1150 L1858 1195"/></g>
<path d="M1885 1140 L1933 1130 L1931 1196 L1885 1204 Z" fill="#8e99aa"/>
<path d="M1790 1180 L1885 1196 L1885 1205 L1795 1190 Z" fill="#dde4ee"/>
</g>
<!-- woman -->
<rect x="1622" y="1161" width="149" height="111" fill="#262628"/>
<rect x="1622" y="1271" width="149" height="124" fill="#a6a6aa"/>
<g filter="url(#b2)">
<path d="M1622 1330 L1771 1330 M1622 1370 L1771 1370" stroke="#8e8e92" stroke-width="1.5"/>
<path d="M1640 1271 L1622 1320 M1645 1320 L1630 1390" stroke="#8e8e92" stroke-width="1.2"/>
<ellipse cx="1695" cy="1208" rx="7" ry="10" fill="#d8d8d8"/>
<path d="M1679 1236 L1725 1236 L1738 1290 L1735 1340 L1680 1340 Z" fill="#8a63a0"/>
<rect x="1677" y="1250" width="12" height="22" fill="#4a2a6a"/>
<rect x="1705" y="1250" width="14" height="20" fill="#6a42a0"/>
<path d="M1680 1240 L1655 1295 M1718 1240 L1742 1295" stroke="#d0d0d0" stroke-width="4" fill="none"/>
<path d="M1688 1340 L1685 1380 M1703 1340 L1705 1380" stroke="#e0e0e0" stroke-width="5"/>
<rect x="1735" y="1300" width="28" height="30" fill="#b4a8a8" opacity="0.6"/>
</g>
<!-- humanoid -->
<rect x="1942" y="1133" width="141" height="235" fill="#2b2b2e"/>
<rect x="1942" y="1133" width="65" height="120" fill="#2e3038"/>
<g filter="url(#b2)">
<ellipse cx="2020" cy="1168" rx="12" ry="9" fill="#8a8a8a"/>
<ellipse cx="2022" cy="1195" rx="14" ry="12" fill="#a8a8a8"/>
<path d="M1955 1225 Q1990 1205 2030 1212" stroke="#8a8a8a" stroke-width="6" fill="none"/>
<path d="M1955 1238 Q1995 1225 2035 1225" stroke="#6a6a6a" stroke-width="5" fill="none"/>
<ellipse cx="2025" cy="1245" rx="9" ry="14" fill="#7a7a7a"/>
<rect x="2015" y="1262" width="14" height="40" fill="#3e3e42"/>
<ellipse cx="2005" cy="1308" rx="8" ry="6" fill="#9a9a9a"/>
<ellipse cx="2027" cy="1320" rx="8" ry="6" fill="#8a8a8a"/>
<rect x="2000" y="1325" width="10" height="40" fill="#555"/>
<rect x="2022" y="1330" width="10" height="36" fill="#4a4a4a"/>
</g>
</svg>


<!-- NEXT SLIDE THUMB -->
<div id="next" class="a" style="left:2233px;top:251px;width:987px;height:557px;background:#ffffff;overflow:hidden;border-radius:3px">
<div style="position:absolute;left:542.00px;top:0.00px;width:445.00px;height:557.00px;background:#f4f3f4;"></div>
<div style="position:absolute;left:557.00px;top:49.00px;width:410.00px;height:440.00px;background:radial-gradient(ellipse at 50% 50%, rgba(255,195,205,0.16) 0%, rgba(255,195,205,0.08) 50%, rgba(255,195,205,0) 75%);"></div>
<div style="position:absolute;white-space:pre;line-height:1;transform-origin:0 0;left:73.00px;top:73.85px;font-family:'Liberation Mono',monospace;font-size:25px;color:#111;font-weight:700;transform:scaleX(0.985);">newton.Model</div>
<div style="position:absolute;white-space:pre;line-height:1;transform-origin:0 0;left:73.00px;top:106.51px;font-family:'Liberation Mono',monospace;font-size:16.3px;color:#a9bb58;font-weight:400;">System description</div>
<div style="position:absolute;left:1.00px;top:155.00px;width:468.00px;height:1.60px;background:#c4c4c4;"></div>
<div style="position:absolute;left:73.40px;top:196.80px;width:3.20px;height:3.20px;background:#9a9a9a;border-radius:50%;"></div>
<div style="position:absolute;white-space:pre;line-height:1;transform-origin:0 0;left:85.00px;top:190.03px;font-family:'Liberation Sans',sans-serif;font-size:15.8px;color:#2a2a2a;font-weight:400;">Flat Python struct of 1D, 2D Warp arrays</div>
<div style="position:absolute;left:73.40px;top:222.70px;width:3.20px;height:3.20px;background:#9a9a9a;border-radius:50%;"></div>
<div style="position:absolute;white-space:pre;line-height:1;transform-origin:0 0;left:85.00px;top:215.93px;font-family:'Liberation Sans',sans-serif;font-size:15.8px;color:#2a2a2a;font-weight:400;">Stores non-time varying data</div>
<div style="position:absolute;left:73.40px;top:248.90px;width:3.20px;height:3.20px;background:#9a9a9a;border-radius:50%;"></div>
<div style="position:absolute;white-space:pre;line-height:1;transform-origin:0 0;left:85.00px;top:242.13px;font-family:'Liberation Sans',sans-serif;font-size:15.8px;color:#2a2a2a;font-weight:400;">Support for <span style="color:#b5c860;">generalized</span> and <span style="color:#c0c890;">maximal coordinates</span></div>
<div style="position:absolute;left:73.40px;top:274.80px;width:3.20px;height:3.20px;background:#9a9a9a;border-radius:50%;"></div>
<div style="position:absolute;white-space:pre;line-height:1;transform-origin:0 0;left:85.00px;top:268.03px;font-family:'Liberation Sans',sans-serif;font-size:15.8px;color:#2a2a2a;font-weight:400;">Fundamentally, we store data grouped by frequencies:</div>
<div style="position:absolute;left:98.40px;top:295.70px;width:3.20px;height:3.20px;background:#9a9a9a;border-radius:50%;"></div>
<div style="position:absolute;white-space:pre;line-height:1;transform-origin:0 0;left:110.00px;top:289.86px;font-family:'Liberation Sans',sans-serif;font-size:14.7px;color:#2a2a2a;font-weight:400;">per-Joint (e.g.: parent body)</div>
<div style="position:absolute;left:98.40px;top:315.80px;width:3.20px;height:3.20px;background:#9a9a9a;border-radius:50%;"></div>
<div style="position:absolute;white-space:pre;line-height:1;transform-origin:0 0;left:110.00px;top:309.96px;font-family:'Liberation Sans',sans-serif;font-size:14.7px;color:#2a2a2a;font-weight:400;">per-DOF (e.g.: armature)</div>
<div style="position:absolute;white-space:pre;line-height:1;transform-origin:0 0;left:110.00px;top:329.96px;font-family:'Liberation Sans',sans-serif;font-size:14.7px;color:#2a2a2a;font-weight:400;">per-Articulation (e.g.: joint dof offset)</div>
<div style="position:absolute;white-space:pre;line-height:1;transform-origin:0 0;left:110.00px;top:349.16px;font-family:'Liberation Sans',sans-serif;font-size:14.7px;color:#2a2a2a;font-weight:400;">per-Body (e.g.: mass, inertia)</div>
<div style="position:absolute;white-space:pre;line-height:1;transform-origin:0 0;left:110.00px;top:369.16px;font-family:'Liberation Sans',sans-serif;font-size:14.7px;color:#2a2a2a;font-weight:400;">per-Shape (e.g.: friction coefficients)</div>
<div style="position:absolute;white-space:pre;line-height:1;transform-origin:0 0;left:85.00px;top:395.03px;font-family:'Liberation Sans',sans-serif;font-size:15.8px;color:#2a2a2a;font-weight:400;">Flexible thanks to Python’s dynamic typing</div>
<div style="position:absolute;left:98.40px;top:420.90px;width:3.20px;height:3.20px;background:#9a9a9a;border-radius:50%;"></div>
<div style="position:absolute;white-space:pre;line-height:1;transform-origin:0 0;left:110.00px;top:415.06px;font-family:'Liberation Sans',sans-serif;font-size:14.7px;color:#2a2a2a;font-weight:400;">E.g.: add shape lubrication for custom friction</div>
<div style="position:absolute;white-space:pre;line-height:1;transform-origin:0 0;left:559.00px;top:75.38px;font-family:'Liberation Mono',monospace;font-size:12.3px;color:#a0505a;font-weight:400;"><span style="color:#4a48a8;font-weight:700;">class </span><span style="color:#7070a0;">Model:</span></div>
<div style="position:absolute;white-space:pre;line-height:1;transform-origin:0 0;left:573.00px;top:90.08px;font-family:'Liberation Mono',monospace;font-size:12.3px;color:#5a4040;font-weight:400;">&quot;&quot;&quot;Holds the definition of the simulation model</div>
<div style="position:absolute;white-space:pre;line-height:1;transform-origin:0 0;left:571.00px;top:119.98px;font-family:'Liberation Mono',monospace;font-size:12.3px;color:#9a4a55;font-weight:400;">This class holds the non-time varying description of</div>
<div style="position:absolute;white-space:pre;line-height:1;transform-origin:0 0;left:571.00px;top:134.68px;font-family:'Liberation Mono',monospace;font-size:12.3px;color:#9a4a55;font-weight:400;">the system, i.e.: all geometry, constraints, and</div>
<div style="position:absolute;white-space:pre;line-height:1;transform-origin:0 0;left:571.00px;top:148.88px;font-family:'Liberation Mono',monospace;font-size:12.3px;color:#9a4a55;font-weight:400;">parameters used to describe the simulation.</div>
<div style="position:absolute;white-space:pre;line-height:1;transform-origin:0 0;left:571.00px;top:177.88px;font-family:'Liberation Mono',monospace;font-size:12.3px;color:#6a5555;font-weight:400;">Attributes:</div>
<div style="position:absolute;white-space:pre;line-height:1;transform-origin:0 0;left:583.00px;top:207.28px;font-family:'Liberation Mono',monospace;font-size:12.3px;color:#a8505c;font-weight:400;">body_com : array(dtype=wp.vec3)</div>
<div style="position:absolute;white-space:pre;line-height:1;transform-origin:0 0;left:583.00px;top:221.58px;font-family:'Liberation Mono',monospace;font-size:12.3px;color:#a8505c;font-weight:400;">body_inertia : array(dtype=wp.mat33)</div>
<div style="position:absolute;white-space:pre;line-height:1;transform-origin:0 0;left:583.00px;top:236.28px;font-family:'Liberation Mono',monospace;font-size:12.3px;color:#a8505c;font-weight:400;">body_inv_inertia : array(dtype=wp.mat33)</div>
<div style="position:absolute;white-space:pre;line-height:1;transform-origin:0 0;left:583.00px;top:250.98px;font-family:'Liberation Mono',monospace;font-size:12.3px;color:#a8505c;font-weight:400;">body_mass : array(dtype=float)</div>
<div style="position:absolute;white-space:pre;line-height:1;transform-origin:0 0;left:583.00px;top:280.38px;font-family:'Liberation Mono',monospace;font-size:12.3px;color:#a8505c;font-weight:400;">joint_type : array(dtype=int)</div>
<div style="position:absolute;white-space:pre;line-height:1;transform-origin:0 0;left:583.00px;top:295.08px;font-family:'Liberation Mono',monospace;font-size:12.3px;color:#a8505c;font-weight:400;">joint_parent : array(dtype=int)</div>
<div style="position:absolute;white-space:pre;line-height:1;transform-origin:0 0;left:583.00px;top:309.78px;font-family:'Liberation Mono',monospace;font-size:12.3px;color:#a8505c;font-weight:400;">joint_child : array(dtype=int)</div>
<div style="position:absolute;white-space:pre;line-height:1;transform-origin:0 0;left:583.00px;top:324.48px;font-family:'Liberation Mono',monospace;font-size:12.3px;color:#a8505c;font-weight:400;">joint_X_p : array(dtype=wp.transform)</div>
<div style="position:absolute;white-space:pre;line-height:1;transform-origin:0 0;left:583.00px;top:339.18px;font-family:'Liberation Mono',monospace;font-size:12.3px;color:#a8505c;font-weight:400;">joint_X_c : array(dtype=wp.transform)</div>
<div style="position:absolute;white-space:pre;line-height:1;transform-origin:0 0;left:583.00px;top:353.88px;font-family:'Liberation Mono',monospace;font-size:12.3px;color:#a8505c;font-weight:400;">joint_axis : array(dtype=wp.vec3)</div>
<div style="position:absolute;white-space:pre;line-height:1;transform-origin:0 0;left:583.00px;top:382.88px;font-family:'Liberation Mono',monospace;font-size:12.3px;color:#a8505c;font-weight:400;">spring_indices : array(dtype=int)</div>
<div style="position:absolute;white-space:pre;line-height:1;transform-origin:0 0;left:583.00px;top:397.58px;font-family:'Liberation Mono',monospace;font-size:12.3px;color:#a8505c;font-weight:400;">spring_rest_length : array(dtype=float)</div>
<div style="position:absolute;white-space:pre;line-height:1;transform-origin:0 0;left:583.00px;top:412.28px;font-family:'Liberation Mono',monospace;font-size:12.3px;color:#a8505c;font-weight:400;">spring_stiffness : array(dtype=float)</div>
<div style="position:absolute;white-space:pre;line-height:1;transform-origin:0 0;left:583.00px;top:426.98px;font-family:'Liberation Mono',monospace;font-size:12.3px;color:#a8505c;font-weight:400;">spring_damping : array(dtype=float)</div>
<div style="position:absolute;white-space:pre;line-height:1;transform-origin:0 0;left:583.00px;top:441.18px;font-family:'Liberation Mono',monospace;font-size:12.3px;color:#a8505c;font-weight:400;">spring_control : array(dtype=float)</div>
<div style="position:absolute;left:0.00px;top:534.00px;width:4.00px;height:23.00px;background:#9cc520;"></div>
<div style="position:absolute;left:15.00px;top:536.00px;width:8.00px;height:6.00px;background:#a8c858;border-radius:50% 0 0 50%;"></div>
<div style="position:absolute;white-space:pre;line-height:1;transform-origin:0 0;left:23.00px;top:535.31px;font-family:'Liberation Sans',sans-serif;font-size:8.5px;color:#333;font-weight:700;transform:scaleX(0.9);">NVIDIA</div>

</div>
<div class="a" style="left:2811px;top:828px;width:92px;height:2px;background:#262626"></div>
<div class="a" style="left:2811px;top:838px;width:92px;height:2px;background:#262626"></div>
<div class="t" style="left:2250px;top:881px;font-size:48px;color:#c8c8c8;transform:scaleX(0.867)">Given these principles, we arrived...</div>

<!-- bottom tools -->
<svg style="left:0;top:0" width="1000" height="1600">
  <g fill="#a6a6a6">
    <!-- pen -->
    <path d="M83 1492 Q88 1488 93 1493 Q97 1498 93 1502 L54 1541 L44 1531 Z"/>
    <path d="M42 1533 L52 1543 L40 1555 L31 1558 L28 1555 L31 1546 Z"/>
    <circle cx="23" cy="1560" r="4"/>
    <!-- slides -->
    <rect x="152" y="1490" width="27" height="28"/>
    <rect x="187" y="1490" width="28" height="20"/>
    <rect x="152" y="1525" width="19" height="27"/>
  </g>
  <rect x="177" y="1513" width="48" height="50" fill="none" stroke="#a6a6a6" stroke-width="7"/>
  <g fill="none" stroke="#a6a6a6">
    <circle cx="319" cy="1519" r="24" stroke-width="5"/>
    <path d="M337 1537 L358 1558" stroke-width="9" stroke-linecap="round"/>
    <!-- black screen -->
    <path d="M427 1491 L427 1546 M427 1491 L503 1491" stroke-width="3.5" stroke-dasharray="5 3"/>
    <path d="M425 1546 L503 1491" stroke-width="3.5"/>
    <path d="M499 1506 L499 1543 L446 1543" stroke-width="4.5"/>
    <!-- subtitles -->
    <rect x="562" y="1496" width="77" height="64" rx="2" stroke-width="3.5"/>
    <path d="M571 1543 L583 1543 M587 1543 L630 1543 M571 1551 L630 1551" stroke-width="3"/>
  </g>
  <g fill="#a6a6a6">
    <rect x="462" y="1543" width="14" height="17"/>
    <path d="M440 1569 L446 1560 L490 1560 L496 1569 Z"/>
  </g>
  <!-- camera highlight -->
  <rect x="692" y="1484" width="89" height="91" rx="6" fill="#3d3b3c"/>
  <g fill="none" stroke="#f2f2f2" stroke-width="3.5">
    <rect x="700" y="1503" width="52" height="52" rx="8"/>
    <path d="M756 1520 L775 1503 L775 1555 L756 1538 Z" stroke-linejoin="round"/>
  </g>
  <!-- more -->
  <circle cx="874" cy="1529" r="37.5" fill="none" stroke="#a6a6a6" stroke-width="3.5"/>
  <g fill="#a6a6a6"><circle cx="858" cy="1529" r="5"/><circle cx="874" cy="1529" r="5"/><circle cx="890" cy="1529" r="5"/></g>
</svg>
<!-- cursor -->
<svg style="left:0;top:0" width="1300" height="1600">
  <path d="M1220 1543 L1220 1556 L1223 1553 L1226 1559 L1228 1558 L1225 1552 L1229 1552 Z" fill="#ffffff" stroke="#222" stroke-width="0.8"/>
</svg>

<!-- slide navigation -->
<svg style="left:0;top:0" width="1400" height="2100">
  <circle cx="874" cy="1996" r="47.5" fill="none" stroke="#a8a8a8" stroke-width="3.5"/>
  <path d="M858 1997.5 L882 1979 L882 2016 Z" fill="#a8a8a8"/>
  <circle cx="1302" cy="1996" r="47.5" fill="none" stroke="#a8a8a8" stroke-width="3.5"/>
  <path d="M1315 1997.5 L1294 1979 L1294 2016 Z" fill="#a8a8a8"/>
</svg>
<div class="t" style="left:977px;top:1973px;font-size:43px;color:#c0c0c0;transform:scaleX(0.929)">Slide 5 of 33</div>
<div class="a" style="left:973px;top:2031px;width:230px;height:13px;background:linear-gradient(90deg,#000 0%,#000 75%,rgba(0,0,0,0) 100%);border-radius:3px"></div>
<div class="a" style="left:973px;top:2032px;width:34px;height:11px;background:#cfcfcf;border-radius:3px"></div>


<!-- meet bar bg -->
<div class="a" style="left:0;top:2103px;width:3223px;height:138px;background:#131313"></div>
<!-- meet buttons -->
<div class="a" style="left:1302px;top:2141px;width:176px;height:96px;background:#601410;border-radius:22px"></div>
<div class="a" style="left:1382px;top:2141px;width:96px;height:96px;background:#f9dedc;border-radius:22px"></div>
<div class="a" style="left:1494px;top:2141px;width:176px;height:96px;background:#601410;border-radius:22px"></div>
<div class="a" style="left:1574px;top:2141px;width:96px;height:96px;background:#f9dedc;border-radius:22px"></div>
<div class="a" style="left:1686px;top:2141px;width:112px;height:96px;background:#333537;border-radius:48px"></div>
<div class="a" style="left:1814px;top:2141px;width:112px;height:96px;background:#333537;border-radius:48px"></div>
<div class="a" style="left:1942px;top:2141px;width:112px;height:96px;background:#333537;border-radius:48px"></div>
<div class="a" style="left:2070px;top:2141px;width:112px;height:96px;background:#333537;border-radius:48px"></div>
<div class="a" style="left:2198px;top:2141px;width:72px;height:96px;background:#333537;border-radius:36px"></div>
<div class="a" style="left:2286px;top:2141px;width:144px;height:96px;background:#dc362e;border-radius:48px"></div>
<svg style="left:0;top:0" width="2500" height="2241">
  <g fill="none" stroke="#f9dedc" stroke-width="3.2">
    <path d="M1338.5 2194 L1348 2184.5 L1357.5 2194"/>
    <path d="M1530.5 2194 L1540 2184.5 L1549.5 2194"/>
  </g>
  <g fill="none" stroke="#601410" stroke-width="3.4">
    <path d="M1425.5 2186 L1425.5 2175 A4.5 4.5 0 0 1 1434.5 2175 L1434.5 2191"/>
    <path d="M1418 2187 A12 12 0 0 0 1430 2199 A12 12 0 0 0 1433 2198.5"/>
    <path d="M1442 2187 A12 12 0 0 1 1440 2193"/>
    <path d="M1430 2199 L1430 2207"/>
    <path d="M1411.5 2172 L1447 2208"/>
    <path d="M1612 2175 L1630 2175 A2 2 0 0 1 1632 2177 L1632 2186 M1601.5 2178 L1601.5 2202 A3 3 0 0 0 1604.5 2205 L1632 2205 L1632 2199"/>
    <path d="M1600.5 2171 L1641 2211"/>
  </g>
  <path d="M1634 2186 L1642 2178 L1642 2201 L1634 2193 Z" fill="#601410"/>
  <g fill="none" stroke="#e3e3e3" stroke-width="4">
    <rect x="1724" y="2173" width="36" height="26" rx="3"/>
    <circle cx="1870" cy="2189" r="18"/>
    <rect x="1982" y="2175" width="32" height="28" rx="3"/>
    <path d="M1995.5 2187.5 L1995.5 2185.5 L1988.5 2185.5 L1988.5 2193 L1995.5 2193 L1995.5 2191 M2009.5 2187.5 L2009.5 2185.5 L2002.5 2185.5 L2002.5 2193 L2009.5 2193 L2009.5 2191" stroke-width="3"/>
  </g>
  <g fill="#e3e3e3">
    <rect x="1720" y="2203" width="44" height="4"/>
    <path d="M1742 2178 L1750 2186 L1747.5 2188.5 L1744 2185 L1744 2194 L1740 2194 L1740 2185 L1736.5 2188.5 L1734 2186 Z"/>
    <circle cx="1863" cy="2184" r="3"/><circle cx="1877" cy="2184" r="3"/>
    <path d="M1860 2193 L1880 2193 A10 7 0 0 1 1860 2193 Z"/>
    <circle cx="2234" cy="2177" r="4"/><circle cx="2234" cy="2189" r="4"/><circle cx="2234" cy="2201" r="4"/>
  </g>
  <g fill="none" stroke="#e3e3e3" stroke-width="3.8" stroke-linecap="butt">
    <path d="M2142 2175 L2142 2196 A13.5 13.5 0 0 1 2116 2202 L2105.5 2190 L2109 2187.5 L2118 2195.5 L2118 2174" stroke-linejoin="round"/><path d="M2126 2189 L2126 2169 M2134 2189 L2134 2171" stroke-linecap="round"/>
  </g>
  <g transform="translate(2335 2167.6) scale(1.92)"><path fill="#ffffff" d="M12 9c-1.6 0-3.15.25-4.6.72v3.1c0 .39-.23.74-.56.9-.98.49-1.87 1.12-2.66 1.850-.18.18-.43.28-.7.28-.28 0-.53-.11-.71-.29L.29 13.08c-.18-.17-.29-.42-.29-.7 0-.28.11-.53.29-.71C3.34 8.78 7.46 7 12 7s8.66 1.78 11.71 4.67c.18.18.29.43.29.71 0 .28-.11.53-.29.71l-2.48 2.48c-.18.18-.43.29-.71.29-.27 0-.52-.11-.7-.28-.79-.74-1.69-1.36-2.67-1.85-.33-.16-.56-.5-.56-.9v-3.1C15.15 9.25 13.6 9 12 9z"/>
<path fill="#dc362e" d="M2.2 12.4 L4.6 11.2 L5.4 12.6 L3.4 13.9 Z M21.8 12.4 L19.4 11.2 L18.6 12.6 L20.6 13.9 Z"/></g>
</svg>
<!-- font size A A -->
<svg style="left:0;top:0" width="2400" height="2100">
  <text x="2233" y="2047" font-family="Liberation Serif" font-weight="700" font-size="41" fill="#a8a8a8">A</text>
  <path d="M2261 2022 L2266 2016 L2271 2022 Z" fill="#a8a8a8"/>
  <text x="2318" y="2047" font-family="Liberation Serif" font-weight="700" font-size="30" fill="#a8a8a8">A</text>
  <path d="M2341 2016 L2351 2016 L2346 2021 Z" fill="#a8a8a8"/>
</svg>

<!-- MEET BAR -->
<div class="t" style="left:-9px;top:2170px;font-size:35px;color:#e8e8e8;transform:scaleX(0.92)">12:06 PM</div>
<div class="a" style="left:155px;top:2174px;width:2px;height:30px;background:#d0d0d0"></div>
<div class="t" style="left:183px;top:2170px;font-size:35px;color:#e8e8e8">par-yxns-rop</div>
</body></html>
